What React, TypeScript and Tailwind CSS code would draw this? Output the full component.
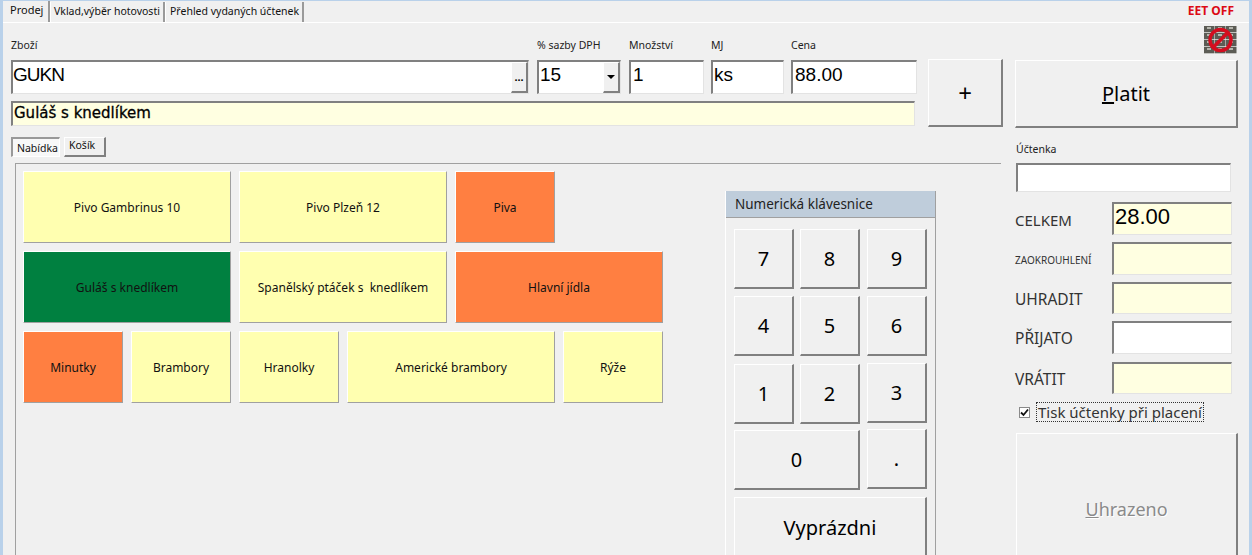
import React from "react";

const sunken =
  "border-t-2 border-l-2 border-t-[#808080] border-l-[#808080] border-r border-b border-r-[#e3e3e3] border-b-[#e3e3e3]";
const raised =
  "border-t border-l border-t-white border-l-white border-r-2 border-b-2 border-r-[#808080] border-b-[#808080] bg-[#f0f0f0]";
const tile =
  "h-[72px] pt-px flex items-center justify-center text-[12px] text-[#111] border-t border-l border-t-white border-l-white border-r border-b border-r-[#a0a0a0] border-b-[#a0a0a0]";
const yellow = "bg-[#ffffb0]";
const orange = "bg-[#ff7f41]";

const Label = ({ w, children }: { w: string; children: React.ReactNode }) => (
  <div className={`${w} text-[10.5px] leading-[13px] text-[#222]`}>{children}</div>
);

const TotalRow = ({
  label,
  labelClass,
  white,
  value,
  h,
}: {
  label: string;
  labelClass: string;
  white?: boolean;
  value?: string;
  h: string;
}) => (
  <div className={`flex items-center shrink-0 ${h}`}>
    <div className={`w-[97px] pt-[3px] text-[#333] ${labelClass}`}>{label}</div>
    <div
      className={`w-[120px] h-full ${sunken} ${
        white ? "bg-white" : "bg-[#ffffe1]"
      } font-['Liberation_Sans',sans-serif] text-[22px] leading-[26px] pl-px text-black`}
    >
      {value}
    </div>
  </div>
);

const KeypadIcon = () => (
  <svg width="33" height="28" viewBox="0 0 33 28" className="block">
    {[0, 1, 2, 3].map((r) =>
      [0, 1, 2].map((c) => (
        <g key={`${r}-${c}`}>
          <rect x={c * 11} y={r * 7} width="10.5" height="6.3" fill="#5c5c55" />
          <rect x={c * 11 + 3} y={r * 7 + 1} width="4" height="2" fill="#b5b5ad" />
        </g>
      ))
    )}
    <circle cx="16.5" cy="14" r="10.5" fill="none" stroke="#d40d1f" strokeWidth="3.5" />
    <path d="M9 21.5 L24 6.5" stroke="#d40d1f" strokeWidth="3.5" />
  </svg>
);

const Key = ({ w, h, mt, children }: { w: string; h: string; mt?: string; children: React.ReactNode }) => (
  <div
    className={`${w} ${h} ${mt ?? ""} ${raised} flex items-center justify-center text-[20px] text-black`}
  >
    {children}
  </div>
);

export default function App() {
  return (
    <div className="w-[1252px] h-[555px] overflow-hidden bg-[#b9d1ea] pt-px pl-[3px] pr-[3px] font-['Noto_Sans',sans-serif]">
      <div className="h-[554px] bg-[#f0f0f0] flex flex-col overflow-hidden">
        {/* Top tabs */}
        <div className="h-[22px] flex items-end border-b border-b-white shrink-0 relative text-[11px] text-[#111]">
          <div className="w-[47px] h-[21px] pl-[7px] leading-[18px] border-r-2 border-r-[#9a9a9a]">Prodej</div>
          <div className="w-[115px] h-[20px] pl-[3px] leading-[19px] border-l border-l-white border-r-2 border-r-[#9a9a9a] whitespace-nowrap text-[10.5px]">
            Vklad,výběr hotovosti
          </div>
          <div className="w-[139px] h-[20px] pl-[4px] leading-[19px] border-l border-l-white border-r-2 border-r-[#9a9a9a] whitespace-nowrap text-[10.5px]">
            Přehled vydaných účtenek
          </div>
          <div className="absolute right-[15px] top-[2px] text-[12px] leading-[16px] font-bold text-[#dc0a14]">
            EET OFF
          </div>
        </div>

        <div className="flex flex-1 min-h-0">
          {/* Left part */}
          <div className="w-[1012px] shrink-0 flex flex-col min-h-0">
            <div className="flex pl-[8px] pt-[16px] shrink-0">
              <div className="w-[906px]">
                <div className="flex h-[13px] mb-[8px]">
                  <Label w="w-[526px]">Zboží</Label>
                  <Label w="w-[92px]">% sazby DPH</Label>
                  <Label w="w-[82px]">Množství</Label>
                  <Label w="w-[80px]">MJ</Label>
                  <Label w="w-[120px]">Cena</Label>
                </div>
                <div className="flex h-[34px] text-[19px] text-black font-['Liberation_Sans',sans-serif] leading-[26px]">
                  <div className={`w-[518px] ${sunken} bg-white flex justify-between`}>
                    <span className="tracking-[-1px]">GUKN</span>
                    <div className={`w-[17px] h-[31px] ${raised} text-[11px] font-bold flex items-center justify-center`}>
                      ...
                    </div>
                  </div>
                  <div className={`ml-[8px] w-[84px] ${sunken} bg-white flex justify-between pl-[1px]`}>
                    15
                    <div className={`w-[17px] h-[31px] ${raised} flex items-center justify-center`}>
                      <span className="border-t-[4px] border-x-[4px] border-t-black border-x-transparent" />
                    </div>
                  </div>
                  <div className={`ml-[8px] w-[75px] ${sunken} bg-white pl-[2px]`}>1</div>
                  <div className={`ml-[7px] w-[73px] ${sunken} bg-white pl-px`}>ks</div>
                  <div className={`ml-[7px] w-[126px] ${sunken} bg-white pl-[2px]`}>88.00</div>
                </div>
                <div
                  className={`mt-[7px] h-[25px] w-[904px] ${sunken} bg-[#ffffe1] pl-[1px] text-[15px] leading-[21px] text-black font-['DejaVu_Sans',sans-serif] [-webkit-text-stroke:0.3px_#000]`}
                >
                  Guláš s knedlíkem
                </div>
              </div>
              <div className={`ml-[11px] mt-[20px] w-[75px] h-[68px] ${raised} flex items-center justify-center text-[24px] text-black`}>
                +
              </div>
            </div>

            {/* Nabidka / Kosik tabs */}
            <div className="flex pl-[8px] mt-[10px] text-[10.5px] text-[#111] h-[20px] shrink-0">
              <div className="w-[49px] border-t-2 border-l-2 border-t-[#999] border-l-[#999] border-r border-b border-r-white border-b-white bg-[#f8f8f8] pl-[4px] leading-[19px]">
                Nabídka
              </div>
              <div className={`ml-[4px] w-[42px] ${raised} pl-[4px] leading-[15px]`}>Košík</div>
            </div>

            {/* Menu panel */}
            <div className="ml-[12px] mr-[14px] mt-[6px] flex-1 border-t border-l border-t-[#a0a0a0] border-l-[#a0a0a0] flex pl-[7px] pt-[7px] min-h-0 overflow-hidden">
              <div className="w-[640px] shrink-0 flex flex-col gap-[8px]">
                <div className="flex gap-[8px]">
                  <div className={`${tile} ${yellow} w-[208px]`}>Pivo Gambrinus 10</div>
                  <div className={`${tile} ${yellow} w-[208px]`}>Pivo Plzeň 12</div>
                  <div className={`${tile} ${orange} w-[100px]`}>Piva</div>
                </div>
                <div className="flex gap-[8px]">
                  <div className={`${tile} bg-[#008040] w-[208px]`}>Guláš s knedlíkem</div>
                  <div className={`${tile} ${yellow} w-[208px]`}>Spanělský ptáček s&nbsp; knedlíkem</div>
                  <div className={`${tile} ${orange} w-[208px]`}>Hlavní jídla</div>
                </div>
                <div className="flex gap-[8px]">
                  <div className={`${tile} ${orange} w-[100px]`}>Minutky</div>
                  <div className={`${tile} ${yellow} w-[100px]`}>Brambory</div>
                  <div className={`${tile} ${yellow} w-[100px]`}>Hranolky</div>
                  <div className={`${tile} ${yellow} w-[208px]`}>Americké brambory</div>
                  <div className={`${tile} ${yellow} w-[100px]`}>Rýže</div>
                </div>
              </div>

              {/* Numeric keypad */}
              <div className="ml-[62px] mt-[20px] w-[211px] shrink-0 border-r border-r-[#a0a0a0] border-l border-l-white h-[400px]">
                <div className="h-[27px] bg-[#bfcddb] border-b border-b-[#a0a0a0] pl-[9px] text-[13.5px] leading-[27px] text-[#222]">
                  Numerická klávesnice
                </div>
                <div className="pl-[8px] pt-[11px]">
                  <div className="flex">
                    <Key w="w-[60px]" h="h-[60px]">7</Key>
                    <Key w="w-[60px] ml-[6px]" h="h-[60px]">8</Key>
                    <Key w="w-[60px] ml-[7px]" h="h-[60px]">9</Key>
                  </div>
                  <div className="flex mt-[7px]">
                    <Key w="w-[60px]" h="h-[60px]">4</Key>
                    <Key w="w-[60px] ml-[6px]" h="h-[60px]">5</Key>
                    <Key w="w-[60px] ml-[7px]" h="h-[60px]">6</Key>
                  </div>
                  <div className="flex mt-[8px] items-start">
                    <Key w="w-[60px]" h="h-[60px]">1</Key>
                    <Key w="w-[60px] ml-[6px]" h="h-[60px]">2</Key>
                    <Key w="w-[60px] ml-[7px]" h="h-[60px]" mt="-mt-px">3</Key>
                  </div>
                  <div className="flex mt-[6px] items-start">
                    <Key w="w-[126px]" h="h-[60px]">0</Key>
                    <Key w="w-[60px] ml-[7px]" h="h-[60px]" mt="-mt-px">.</Key>
                  </div>
                  <Key w="w-[193px]" h="h-[62px]" mt="mt-[7px]">Vyprázdni</Key>
                </div>
              </div>
            </div>
          </div>

          {/* Right part */}
          <div className="w-[234px] shrink-0 flex flex-col">
            <div className="h-[28px] mt-[3px] flex justify-end pr-[12px] shrink-0">
              <KeypadIcon />
            </div>
            <div className={`mt-[6px] w-[223px] h-[68px] shrink-0 ${raised} flex items-center justify-center text-[20px] text-black`}>
              <span>
                <u>P</u>latit
              </span>
            </div>
            <div className="mt-[15px] ml-px text-[10.5px] leading-[13px] text-[#222] shrink-0">Účtenka</div>
            <div className={`mt-[7px] ml-px w-[215px] h-[29px] shrink-0 ${sunken} bg-white`} />
            <div className="mt-[10px] flex flex-col gap-[7px] shrink-0">
              <TotalRow label="CELKEM" labelClass="text-[15px]" value="28.00" h="h-[33px]" />
              <TotalRow label="ZAOKROUHLENÍ" labelClass="text-[10px]" h="h-[33px]" />
              <TotalRow label="UHRADIT" labelClass="text-[15.5px]" h="h-[32px]" />
              <TotalRow label="PŘIJATO" labelClass="text-[15.5px]" white h="h-[33px]" />
              <TotalRow label="VRÁTIT" labelClass="text-[15.5px]" h="h-[32px] mt-px" />
            </div>
            <div className="mt-[8px] ml-[4px] flex items-center h-[20px] shrink-0">
              <span className="w-[11px] h-[11px] bg-white border border-[#8a8a8a] flex items-center justify-center">
                <svg width="9" height="9" viewBox="0 0 9 9">
                  <path d="M1 4.5 L3.5 7 L8 1.5" fill="none" stroke="#111" strokeWidth="1.8" />
                </svg>
              </span>
              <span className="ml-[6px] px-px border border-dotted border-[#333] text-[15px] leading-[18px] text-[#333] whitespace-nowrap">
                Tisk účtenky při placení
              </span>
            </div>
            <div className={`mt-[11px] ml-px w-[222px] h-[140px] shrink-0 ${raised} flex justify-center pt-[63px]`}>
              <span className="text-[18px] leading-[24px] text-[#8a8a8a] [text-shadow:1px_1px_0_#fff]">
                <u>U</u>hrazeno
              </span>
            </div>
          </div>
        </div>
      </div>
    </div>
  );
}
